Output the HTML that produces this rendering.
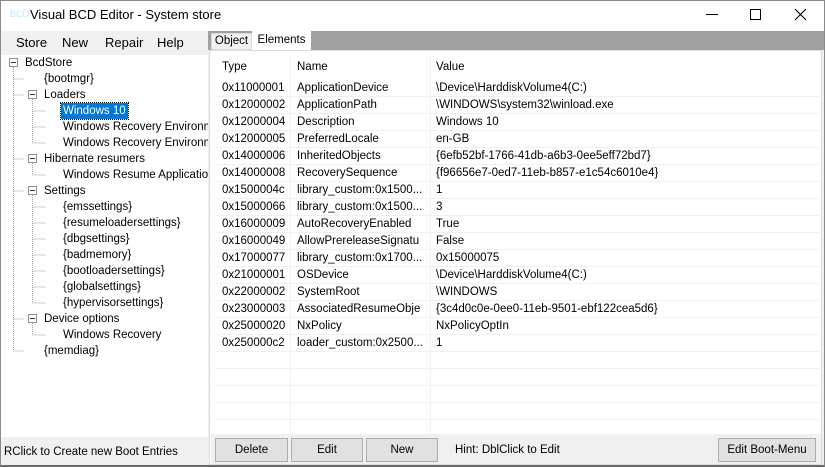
<!DOCTYPE html>
<html><head><meta charset="utf-8"><style>
*{margin:0;padding:0;box-sizing:border-box}
body{width:825px;height:467px;overflow:hidden;background:#f0f0f0;font-family:"Liberation Sans",sans-serif;font-size:12px;color:#000;position:relative}
.a{position:absolute;white-space:nowrap}
#win{position:absolute;left:0;top:0;width:825px;height:467px;border:1px solid #8a8a8a;border-bottom:2px solid #6a6a6a}
#title{position:absolute;left:1px;top:1px;width:823px;height:30px;background:#fff}
.t{font-size:11.5px;line-height:16px}
#tree{position:absolute;left:1px;top:55px;width:207px;height:382px;background:#fff;overflow:hidden}
#tree .a{margin-top:-55px}
.row{position:absolute;left:215px;width:605px;height:17px;border-bottom:1px solid #f0f0f0;font-size:11.5px}
.row span{position:absolute;top:1px;line-height:15px;overflow:hidden}
.row span:nth-child(2){width:134px}
.btn{position:absolute;top:438px;height:24px;background:#e1e1e1;border:1px solid #adadad;text-align:center;line-height:22px;font-size:11.5px}
</style></head><body>
<div id="win"></div>
<div id="title"></div>
<div class="a" style="left:10px;top:9px;font-size:9px;color:#bfe8f4">BCD</div>
<div class="a" style="left:30px;top:7px;font-size:13px">Visual BCD Editor - System store</div>
<div class="a" style="left:706px;top:14px;width:12px;height:1px;background:#000"></div>
<div class="a" style="left:750px;top:9px;width:11px;height:11px;border:1px solid #000"></div>
<svg class="a" style="left:794px;top:8px" width="13" height="13"><path d="M1 1L12 12M12 1L1 12" stroke="#000" stroke-width="1.1"/></svg>
<div class="a" style="left:16px;top:35px;font-size:13px">Store</div>
<div class="a" style="left:62px;top:35px;font-size:13px">New</div>
<div class="a" style="left:105px;top:35px;font-size:13px">Repair</div>
<div class="a" style="left:157px;top:35px;font-size:13px">Help</div>
<!-- tree -->
<div id="tree">
<svg class="a" style="left:-1px;top:0;margin-top:0" width="208" height="300">
<g stroke="#a0a0a0" stroke-dasharray="1 1" fill="none">
<path d="M13.5 12V296M13.5 24H24M13.5 40H24M13.5 104H24M13.5 136H24M13.5 264H24M13.5 296H24"/>
<path d="M32.5 44V88M32.5 56H46M32.5 72H46M32.5 88H46"/>
<path d="M32.5 108V120M32.5 120H46"/>
<path d="M32.5 140V248M32.5 152H46M32.5 168H46M32.5 184H46M32.5 200H46M32.5 216H46M32.5 232H46M32.5 248H46"/>
<path d="M32.5 268V280M32.5 280H46"/>
</g>
<g fill="#fff" stroke="#919191"><rect x="9.5" y="3.5" width="8" height="8"/><rect x="28.5" y="35.5" width="8" height="8"/><rect x="28.5" y="99.5" width="8" height="8"/><rect x="28.5" y="131.5" width="8" height="8"/><rect x="28.5" y="259.5" width="8" height="8"/></g>
<g stroke="#333"><path d="M11 7.5H16M30 39.5H35M30 103.5H35M30 135.5H35M30 263.5H35"/></g>
</svg>
<div class="a t" style="left:24px;top:55px">BcdStore</div>
<div class="a t" style="left:43px;top:71px">{bootmgr}</div>
<div class="a t" style="left:43px;top:87px">Loaders</div>
<div class="a t" style="left:60px;top:103px;background:#0078d7;color:#fff;padding:0 2px;outline:1px dotted #000">Windows 10</div>
<div class="a t" style="left:62px;top:119px">Windows Recovery Environment</div>
<div class="a t" style="left:62px;top:135px">Windows Recovery Environment</div>
<div class="a t" style="left:43px;top:151px">Hibernate resumers</div>
<div class="a t" style="left:62px;top:167px">Windows Resume Application</div>
<div class="a t" style="left:43px;top:183px">Settings</div>
<div class="a t" style="left:62px;top:199px">{emssettings}</div>
<div class="a t" style="left:62px;top:215px">{resumeloadersettings}</div>
<div class="a t" style="left:62px;top:231px">{dbgsettings}</div>
<div class="a t" style="left:62px;top:247px">{badmemory}</div>
<div class="a t" style="left:62px;top:263px">{bootloadersettings}</div>
<div class="a t" style="left:62px;top:279px">{globalsettings}</div>
<div class="a t" style="left:62px;top:295px">{hypervisorsettings}</div>
<div class="a t" style="left:43px;top:311px">Device options</div>
<div class="a t" style="left:62px;top:327px">Windows Recovery</div>
<div class="a t" style="left:43px;top:343px">{memdiag}</div>
</div>
<div class="a" style="left:4px;top:446px;font-size:11.5px">RClick to Create new Boot Entries</div>
<!-- tabs -->
<div class="a" style="left:208px;top:31px;width:616px;height:19px;background:#a0a0a0"></div>
<div class="a" style="left:211px;top:33px;width:41px;height:17px;background:#f0f0f0;border:1px solid #d9d9d9;text-align:center;line-height:15px;font-size:11.5px">Object</div>
<div class="a" style="left:252px;top:31px;width:59px;height:20px;background:#fff;text-align:center;line-height:18px;font-size:11.5px">Elements</div>
<div class="a" style="left:209px;top:50px;width:613px;height:415px;background:#fff;border:1px solid #dcdcdc"></div>
<div class="a" style="left:211px;top:434px;width:610px;height:30px;background:#f0f0f0"></div>
<!-- table -->
<div class="a" style="left:290px;top:56px;width:1px;height:378px;background:#f0f0f0"></div>
<div class="a" style="left:430px;top:56px;width:1px;height:378px;background:#f0f0f0"></div>
<div class="a" style="left:222px;top:61px;font-size:11.5px">Type</div>
<div class="a" style="left:297px;top:61px;font-size:11.5px">Name</div>
<div class="a" style="left:436px;top:61px;font-size:11.5px">Value</div>
<div class="btn" style="left:215px;width:73px">Delete</div>
<div class="btn" style="left:291px;width:72px">Edit</div>
<div class="btn" style="left:366px;width:72px">New</div>
<div class="a" style="left:455px;top:444px;font-size:11.5px">Hint: DblClick to Edit</div>
<div class="btn" style="left:718px;width:98px">Edit Boot-Menu</div>
<div class="row" style="top:80px"><span style="left:7px">0x11000001</span><span style="left:82px">ApplicationDevice</span><span style="left:221px">\Device\HarddiskVolume4(C:)</span></div>
<div class="row" style="top:97px"><span style="left:7px">0x12000002</span><span style="left:82px">ApplicationPath</span><span style="left:221px">\WINDOWS\system32\winload.exe</span></div>
<div class="row" style="top:114px"><span style="left:7px">0x12000004</span><span style="left:82px">Description</span><span style="left:221px">Windows 10</span></div>
<div class="row" style="top:131px"><span style="left:7px">0x12000005</span><span style="left:82px">PreferredLocale</span><span style="left:221px">en-GB</span></div>
<div class="row" style="top:148px"><span style="left:7px">0x14000006</span><span style="left:82px">InheritedObjects</span><span style="left:221px">{6efb52bf-1766-41db-a6b3-0ee5eff72bd7}</span></div>
<div class="row" style="top:165px"><span style="left:7px">0x14000008</span><span style="left:82px">RecoverySequence</span><span style="left:221px">{f96656e7-0ed7-11eb-b857-e1c54c6010e4}</span></div>
<div class="row" style="top:182px"><span style="left:7px">0x1500004c</span><span style="left:82px">library_custom:0x1500...</span><span style="left:221px">1</span></div>
<div class="row" style="top:199px"><span style="left:7px">0x15000066</span><span style="left:82px">library_custom:0x1500...</span><span style="left:221px">3</span></div>
<div class="row" style="top:216px"><span style="left:7px">0x16000009</span><span style="left:82px">AutoRecoveryEnabled</span><span style="left:221px">True</span></div>
<div class="row" style="top:233px"><span style="left:7px">0x16000049</span><span style="left:82px">AllowPrereleaseSignatu</span><span style="left:221px">False</span></div>
<div class="row" style="top:250px"><span style="left:7px">0x17000077</span><span style="left:82px">library_custom:0x1700...</span><span style="left:221px">0x15000075</span></div>
<div class="row" style="top:267px"><span style="left:7px">0x21000001</span><span style="left:82px">OSDevice</span><span style="left:221px">\Device\HarddiskVolume4(C:)</span></div>
<div class="row" style="top:284px"><span style="left:7px">0x22000002</span><span style="left:82px">SystemRoot</span><span style="left:221px">\WINDOWS</span></div>
<div class="row" style="top:301px"><span style="left:7px">0x23000003</span><span style="left:82px">AssociatedResumeObje</span><span style="left:221px">{3c4d0c0e-0ee0-11eb-9501-ebf122cea5d6}</span></div>
<div class="row" style="top:318px"><span style="left:7px">0x25000020</span><span style="left:82px">NxPolicy</span><span style="left:221px">NxPolicyOptIn</span></div>
<div class="row" style="top:335px"><span style="left:7px">0x250000c2</span><span style="left:82px">loader_custom:0x2500...</span><span style="left:221px">1</span></div>
<div class="row" style="top:352px"></div>
<div class="row" style="top:369px"></div>
<div class="row" style="top:386px"></div>
<div class="row" style="top:403px"></div>
<div class="row" style="top:420px;border-bottom:none"></div>
</body></html>
